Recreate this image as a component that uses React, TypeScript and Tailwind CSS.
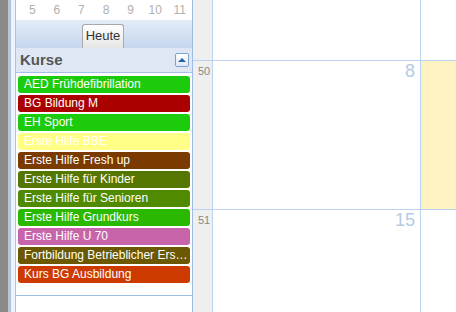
const kurse = [
  { name: "AED Frühdefibrillation", color: "bg-[#1ccc0c]" },
  { name: "BG Bildung M", color: "bg-[#aa0000]" },
  { name: "EH Sport", color: "bg-[#1ccc0c]" },
  { name: "Erste Hilfe BBE", color: "bg-[#ffff88]" },
  { name: "Erste Hilfe Fresh up", color: "bg-[#7a3a00]" },
  { name: "Erste Hilfe für Kinder", color: "bg-[#557700]" },
  { name: "Erste Hilfe für Senioren", color: "bg-[#4f8a00]" },
  { name: "Erste Hilfe Grundkurs", color: "bg-[#2ab800]" },
  { name: "Erste Hilfe U 70", color: "bg-[#c864aa]" },
  { name: "Fortbildung Betrieblicher Ersthelfer", color: "bg-[#6b5800]" },
  { name: "Kurs BG Ausbildung", color: "bg-[#cc3a00]" },
];

const tage = ["5", "6", "7", "8", "9", "10", "11"];

function Wochenzeile({ woche, tag, heute, hoehe }: { woche?: string; tag?: string; heute?: boolean; hoehe: string }) {
  return (
    <div className={`flex shrink-0 ${hoehe} border-b border-[#bcd2f2]`}>
      <div className="w-[20px] shrink-0 bg-[#efefef] border-r border-[#bcd2f2] pl-[5px] pt-[4px] text-[11px] leading-[13px] text-[#888]">
        {woche}
      </div>
      <div className="w-[208px] shrink-0 bg-white border-r border-[#bcd2f2] pr-[5px] pt-[1px] text-right text-[18px] leading-[18px] text-[#b4cbe6]">
        {tag}
      </div>
      <div className={`flex-1 ${heute ? "bg-[#fff2c2]" : "bg-white"}`} />
    </div>
  );
}

export default function App() {
  return (
    <div className="flex w-[456px] h-[312px] overflow-hidden bg-white font-['Liberation_Sans',Arial,sans-serif]">
      <div className="w-[8px] shrink-0 bg-[#8a8a8a]" />
      <div className="w-[1px] shrink-0 bg-[#c4c4c4]" />
      <div className="w-[7px] shrink-0 bg-[#eef3fb] border-l-2 border-r border-[#a9c5ee]" />

      {/* Seitenleiste */}
      <div className="w-[177px] shrink-0 flex flex-col border-r border-[#9dbbe6]">
        <div className="h-[20px] shrink-0 grid grid-cols-7 pl-[4px] bg-white text-[12px] leading-[20px] text-[#b0b0b0] text-center">
          {tage.map((t) => (
            <span key={t}>{t}</span>
          ))}
        </div>
        <div className="h-[28px] shrink-0 flex items-end bg-gradient-to-b from-[#e4ecf7] to-[#c6d6ed] pl-[66px]">
          <div className="h-[24px] w-[42px] rounded-t-[3px] border border-b-0 border-[#a8a8a8] bg-gradient-to-b from-white to-[#e6e6e6] text-[13px] leading-[22px] text-[#333] text-center">
            Heute
          </div>
        </div>
        <div className="h-[25px] shrink-0 flex items-center justify-between bg-[#dfe7f4] border-b border-[#a4c0e8] pl-[4px] pr-[3px]">
          <span className="text-[15px] font-bold text-[#555]">Kurse</span>
          <div className="w-[14px] h-[14px] rounded-[2px] border border-[#7da2ce] bg-gradient-to-b from-white to-[#dde8f6] flex items-center justify-center">
            <div className="w-0 h-0 border-l-[4px] border-r-[4px] border-b-[4px] border-l-transparent border-r-transparent border-b-[#2b5ea8]" />
          </div>
        </div>
        <div className="h-[223px] shrink-0 flex flex-col gap-[2px] px-[2px] pt-[3px] border-b border-[#9dbbe6]">
          {kurse.map((k) => (
            <div
              key={k.name}
              className={`h-[17px] shrink-0 rounded-[3px] ${k.color} pl-[6px] pr-[1px] text-[12px] leading-[17px] text-white truncate`}
            >
              {k.name}
            </div>
          ))}
        </div>
        <div className="flex-1 bg-white" />
      </div>

      {/* Kalender */}
      <div className="flex-1 flex flex-col">
        <Wochenzeile hoehe="h-[61px]" />
        <Wochenzeile hoehe="h-[149px]" woche="50" tag="8" heute />
        <Wochenzeile hoehe="h-[120px]" woche="51" tag="15" />
      </div>
    </div>
  );
}
